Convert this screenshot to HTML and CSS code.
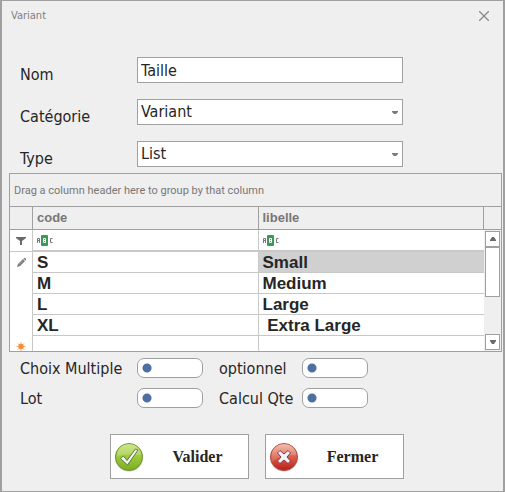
FILE: index.html
```html
<!DOCTYPE html>
<html lang="fr">
<head>
<meta charset="utf-8">
<meta name="viewport" content="width=device-width, initial-scale=1">
<title>Variant</title>
<link rel="stylesheet" href="styles.css">
</head>
<body>
<svg class="defs" aria-hidden="true">
  <defs>
    <linearGradient id="green" x1="0" y1="0" x2="0" y2="1"><stop offset="0" stop-color="#c5df6a"/><stop offset=".5" stop-color="#9cc83a"/><stop offset="1" stop-color="#7aae22"/></linearGradient>
    <linearGradient id="red" x1="0" y1="0" x2="0" y2="1"><stop offset="0" stop-color="#f0b8a4"/><stop offset=".5" stop-color="#d95f4b"/><stop offset="1" stop-color="#b81e1c"/></linearGradient>
    <symbol id="abc" viewBox="0 0 16 11">
      <path d="M.5 8V3.500h2V8M.5 5.500h2M15.500 3.500h-2v4h2" fill="none" stroke="#777"/>
      <rect x="4" width="7" height="11" rx="1" fill="#389a54"/>
      <path d="M6.500 3.500h2v4h-2zM6.500 5.500h2" fill="none" stroke="#fff"/>
    </symbol>
    <symbol id="caret" viewBox="0 0 6 3"><path d="M0 0h6v1L4 3H2L0 1z" fill="#7a7a7a"/></symbol>
  </defs>
</svg>
<main class="window">
  <header class="titlebar">
    <h1>Variant</h1>
    <button class="close" type="button" aria-label="Fermer la fenêtre"><svg viewBox="0 0 10 10" width="10" height="10"><path d="M0 0l10 10M10 0L0 10" stroke="#8a8a8a" stroke-width="1.300"/></svg></button>
  </header>
  <form class="form">
    <div class="fields">
      <label for="nom">Nom</label>
      <input id="nom" class="box" type="text" value="Taille">
      <label for="categorie">Catégorie</label>
      <div class="combo"><select id="categorie" class="box"><option>Variant</option></select><svg class="caret"><use href="#caret"/></svg></div>
      <label for="type">Type</label>
      <div class="combo"><select id="type" class="box"><option>List</option></select><svg class="caret"><use href="#caret"/></svg></div>
    </div>
    <section class="datagrid">
      <p class="group">Drag a column header here to group by that column</p>
      <table>
        <colgroup><col class="mark-col"><col><col><col class="bar-col"></colgroup>
        <thead><tr><th></th><th>code</th><th>libelle</th><th></th></tr></thead>
        <tbody>
          <tr class="filter">
            <td class="mark"><svg width="10" height="8" viewBox="0 0 10 8"><path d="M0 0h10v1L6 4v4H4V4L0 1z" fill="#6a6a6a"/></svg></td>
            <td><svg class="abc"><use href="#abc"/></svg></td>
            <td><svg class="abc"><use href="#abc"/></svg></td>
            <td class="bar" rowspan="6">
              <div class="scroll">
                <button type="button" aria-label="Monter"><svg width="6" height="4" viewBox="0 0 6 4"><path d="M2 0h2l2 3v1H0V3z" fill="#6a6a6a"/></svg></button>
                <div class="thumb"></div>
                <button class="down" type="button" aria-label="Descendre"><svg width="6" height="4" viewBox="0 0 6 4"><path d="M0 0h6v1L4 4H2L0 1z" fill="#6a6a6a"/></svg></button>
              </div>
            </td>
          </tr>
          <tr>
            <td class="mark"><svg width="9" height="9" viewBox="0 0 9 9"><path d="M0 9l1-3 5-5 2 2-5 5zM6.500.5L7 0h1l1 1v1l-.5.5z" fill="#777"/><path d="M2 6.500l4-4" stroke="#bbb" stroke-width=".7"/></svg></td>
            <td>S</td><td class="selected">Small</td>
          </tr>
          <tr><td class="mark"></td><td>M</td><td>Medium</td></tr>
          <tr><td class="mark"></td><td>L</td><td>Large</td></tr>
          <tr><td class="mark"></td><td>XL</td><td>&nbsp;Extra Large</td></tr>
          <tr class="new">
            <td class="mark"><svg width="10" height="9" viewBox="0 0 10 10"><circle cx="5" cy="5" r="3" fill="#f0923c"/><path d="M5 0v10M0 5h10M1.500 1.500l7 7M8.500 1.500l-7 7" stroke="#f0923c" stroke-width=".8"/></svg></td>
            <td></td><td></td>
          </tr>
        </tbody>
      </table>
    </section>
    <div class="options">
      <label for="multiple">Choix Multiple</label><input id="multiple" type="checkbox">
      <label for="optionnel">optionnel</label><input id="optionnel" type="checkbox">
      <label for="lot">Lot</label><input id="lot" type="checkbox">
      <label for="calcul">Calcul Qte</label><input id="calcul" type="checkbox">
    </div>
    <div class="actions">
      <button type="button">
        <svg width="30" height="30" viewBox="0 0 30 30"><circle cx="15" cy="15.500" r="14" fill="#777" opacity=".4"/><circle cx="15" cy="15" r="13.500" fill="url(#green)" stroke="#6d9428"/><path d="M3 14a12 12 0 0 1 24-1Q15 11 3 14z" fill="#fff" opacity=".2"/><path d="M6.500 16.500l3-2.500 3.500 4.500L21.500 7l2.500 1L13.500 23z" fill="#f4f7fb" stroke="#587a32"/></svg>
        <span>Valider</span>
      </button>
      <button type="button">
        <svg width="30" height="30" viewBox="0 0 30 30"><circle cx="15" cy="15.500" r="14" fill="#777" opacity=".4"/><circle cx="15" cy="15" r="13.500" fill="url(#red)" stroke="#b84a40"/><path d="M2.500 14a12.500 12 0 0 1 25-1Q12 12 2.500 20z" fill="#fff" opacity=".15"/><path d="M11 8.500l4 3.500 4-3.500 2.500 2.500-3.500 4 3.500 4-2.500 2.500-4-3.500-4 3.500L8.500 19l3.500-4-3.500-4z" fill="#eef2fa" stroke="#8f3437" stroke-linejoin="round"/></svg>
        <span>Fermer</span>
      </button>
    </div>
  </form>
</main>
</body>
</html>
```
FILE: styles.css
```css
* { box-sizing: border-box; }
body {
  margin: 0;
  background: #efefef;
  color: #262626;
  font: 16px/20px "DejaVu Sans Condensed", "DejaVu Sans", sans-serif;
}
.defs { position: absolute; width: 0; height: 0; }
svg { display: block; }
input, select, button { margin: 0; font: inherit; color: inherit; }
.window {
  min-height: 100vh;
  border: solid #a0a0a0;
  border-width: 1px 2px;
}
.titlebar {
  display: flex;
  align-items: center;
  justify-content: space-between;
  height: 30px;
  padding: 0 10px 0 9px;
}
h1 { margin: 0; font-size: 11px; font-weight: 400; color: #808080; }
.close { padding: 4px; border: 0; background: none; }
.fields {
  display: grid;
  grid-template-columns: 117px 1fr;
  gap: 16px 0;
  padding: 26px 100px 6px 18px;
}
.fields label { padding-top: 8px; height: 26px; }
.box {
  width: 100%;
  height: 26px;
  padding: 0 3px;
  border: 1px solid #a0a0a0;
  border-radius: 0;
  background: #fff;
  appearance: none;
}
.combo { display: grid; align-items: center; }
.combo > * { grid-area: 1 / 1; }
.caret { width: 6px; height: 3px; justify-self: end; margin-right: 5px; pointer-events: none; }
.datagrid { margin: 0 1px 0 7px; border: 1px solid #a0a0a0; }
.group {
  margin: 0;
  padding: 2px 4px 0;
  font-family: Roboto, sans-serif;
  font-size: 11px;
  line-height: 30px;
  color: #777;
}
table {
  width: 100%;
  table-layout: fixed;
  border-collapse: separate;
  border-spacing: 0;
  font-family: "Liberation Sans", Arial, sans-serif;
  font-size: 17px;
  font-weight: 700;
}
.mark-col { width: 23px; }
.bar-col { width: 17px; }
th, td { padding: 0 4px; text-align: left; white-space: nowrap; }
th {
  height: 24px;
  border: solid #a0a0a0;
  border-width: 1px 1px 1px 0;
  font-size: 13px;
  line-height: 22px;
  color: #777;
}
th:last-child { border-right: 0; }
td {
  height: 21px;
  padding-top: 2px;
  border: solid #c8c8c8;
  border-width: 0 0 1px;
  background: #fff;
  line-height: 18px;
}
td:nth-child(2) { border-right-width: 1px; }
.filter td { height: 22px; padding-top: 0; border-bottom-width: 2px; }
td.mark, .filter td.mark { padding: 0; border-right-width: 1px; border-bottom-width: 0; }
.filter td.mark { border-bottom-width: 1px; }
.mark svg { margin: auto; }
.abc { width: 16px; height: 11px; }
td.selected { background: #d0d0d0; }
.new td, .new td.mark { height: 15px; border-bottom-width: 0; }
.new td.mark { vertical-align: bottom; }
td.bar, .filter td.bar { padding: 0; border: 0; background: #efefef; vertical-align: top; }
.scroll { display: flex; flex-direction: column; height: 121px; padding: 1px; }
.scroll button, .thumb { border: 1px solid #a0a0a0; background: #fff; }
.scroll button { display: grid; place-items: center; height: 16px; padding: 0; }
.thumb { height: 50px; }
.scroll .down { margin-top: auto; }
.options {
  display: grid;
  grid-template-columns: 117px 66px 99px 66px;
  row-gap: 10px;
  padding: 6px 18px 0;
}
.options label { padding-top: 1px; height: 20px; white-space: nowrap; }
.options label:nth-of-type(even) { padding-left: 16px; }
.options input {
  height: 20px;
  border: 1px solid #a0a0a0;
  border-radius: 7px;
  background: #fff radial-gradient(circle at 9px 9px, #4f6fa0 4px, #fff 5px);
  appearance: none;
}
.actions {
  display: flex;
  justify-content: center;
  gap: 16px;
  padding: 26px 0 12px 9px;
}
.actions button {
  display: flex;
  align-items: center;
  width: 139px;
  height: 45px;
  padding: 0 3px;
  border: 1px solid #a0a0a0;
  background: #fff;
  font: 700 16px/20px "Liberation Serif", "Times New Roman", serif;
}
.actions span { flex: 1; padding-left: 6px; }
```
